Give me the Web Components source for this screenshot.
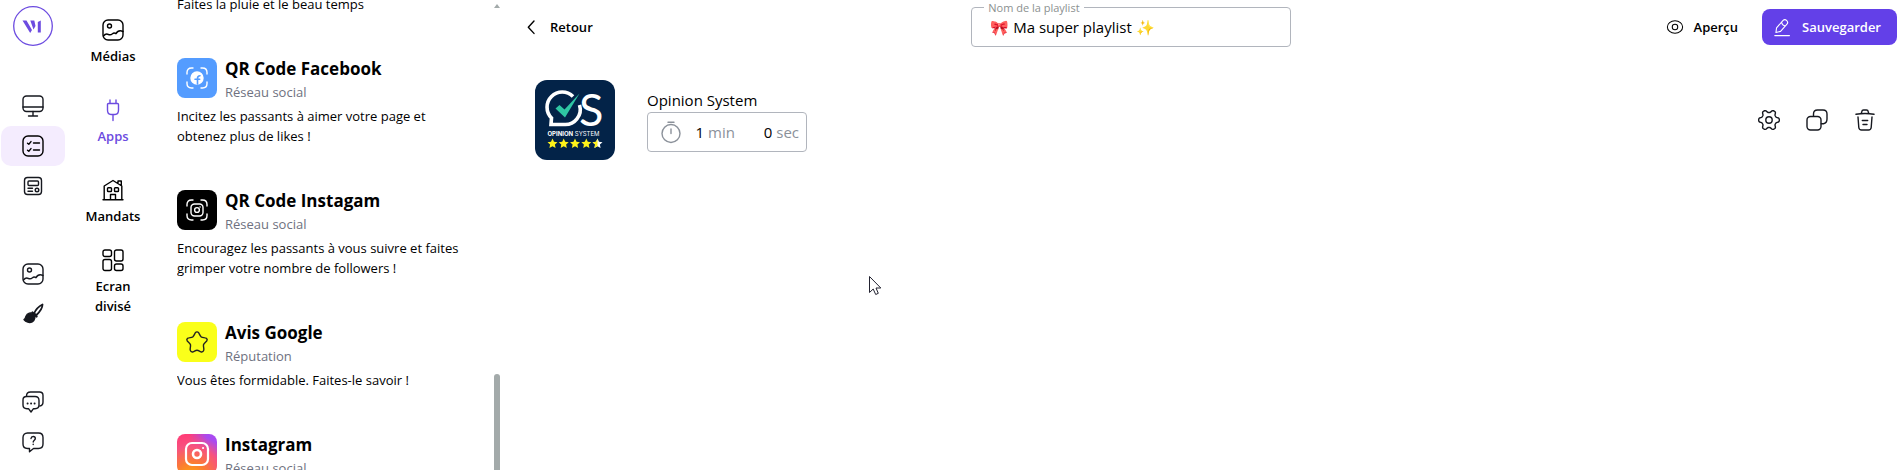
<!DOCTYPE html>
<html lang="fr">
<head>
<meta charset="utf-8">
<meta name="viewport" content="width=device-width, initial-scale=1">
<title>Ma super playlist</title>
<style>
  :root { --accent: #6340e8; --ink: #000; --muted: #6e7180; --line: #b1b5bd; }
  body { margin: 0; font: 13px/20px "Open Sans", "Noto Sans", sans-serif; color: var(--ink); background: #fff; }
</style>
</head>
<body>
<playlist-editor></playlist-editor>
<script>
const define = (name, html, setup) => {
  const template = document.createElement('template');
  template.innerHTML = html;
  customElements.define(name, class extends HTMLElement {
    constructor() {
      super();
      this.attachShadow({ mode: 'open' }).append(template.content.cloneNode(true));
    }
    connectedCallback() { if (setup) setup(this, this.shadowRoot); }
  });
};

// Outline of a six-toothed gear centred on (11, 11).
const gearOutline = () => {
  const points = [];
  for (let a = 0; a < 360; a += 4) {
    const t = a * Math.PI / 180;
    const r = 8.9 + 1.5 * Math.tanh(1.8 * Math.cos(6 * t));
    points.push((11 + r * Math.cos(t)).toFixed(2) + ' ' + (11 + r * Math.sin(t)).toFixed(2));
  }
  return 'M' + points.join('L') + 'z';
};

const ICONS = {
  image: '<rect x="1" y="1" width="20" height="20" rx="5"/><circle cx="7.5" cy="7" r="2"/><path d="M1.5 17c1.500-2 3-2.500 5-1.500 1.500.7 2.500.5 4-.8 1.200-1 2.300-.8 3.500 0 1.300-2.400 3.800-3.700 7-2.200"/>',
  monitor: '<rect x="1" y="1" width="20" height="15.500" rx="3.500"/><path d="M1 12h20M11 16.500v4M6.500 21h9"/>',
  list: '<rect x="1" y="1" width="20" height="20" rx="5"/><path d="M5.500 8.200l1.300 1 2.200-2.600M11.500 8h6M5.500 15.200l1.300 1 2.200-2.600M11.500 15h6"/>',
  news: '<rect x="2.500" y="2.500" width="17" height="17" rx="3"/><rect x="6" y="6" width="10.500" height="4.500" rx="1"/><path d="M6 13.200h4.500M6 16.300h4.500"/><circle cx="15" cy="15" r="1.800"/>',
  brush: '<path d="M12 10.500C14 6 17.500 3 20.500 1.500c0 3.500-2.500 7-6 10.500z" stroke-width="1.800"/><path d="M10.500 9.500l4 4" stroke-width="2.400"/><path d="M2 16.500c1.500-.3 1.300-1.500 2-3.300C5.200 10 9 8.800 11.500 11c2.300 2.300 1.500 6.300-1.300 7.800-2.600 1.400-6.400.4-8.200-2.300z" fill="currentColor"/>',
  chats: '<path d="M4.500 5.200C4.500 2 6 1 8.500 1h9C20 1 21 2.500 21 4.500V11c0 2.500-1 3.800-3.200 4"/><path d="M4.500 5.500H13c2.500 0 4 1.500 4 4v4.500c0 2.300-1.500 3.700-4 3.700h-1.500L9 21l-2.500-3.300H5c-2.500 0-4-1.400-4-3.700V9c0-2.200 1.300-3.500 3.500-3.500z"/><path d="M5.500 12.500h.2M9 12.500h.2M12.500 12.500h.2" stroke-width="1.800"/>',
  help: '<path d="M5.500 2h11C19.500 2 21 4 21 6.500V13c0 3-1.700 4.500-4.500 4.500h-5L7.500 20.800V17.500h-2C2.700 17.500 1 16 1 13V6.500C1 4 2.700 2 5.500 2z"/><path d="M9 7.500c.2-1.300 1-2 2.200-2 1.300 0 2.100.9 2.100 2 0 1.700-2.100 1.700-2.100 3.600M11.200 13.300v.2"/>',
  plug: '<path d="M8 1v3.500M14 1v3.500M6.500 4.500h9q1 0 1 1V11c0 3-1.500 4.500-3.500 4.500H9C7 15.500 5.500 14 5.500 11V5.500q0-1 1-1zM11 15.500V21.500"/>',
  house: '<path d="M1 20.800h20M2.200 20.500V7L11 1.500 19.800 7v13.500M16 4V2h3.300v4.500M8.500 20.500V15.500h5v5"/><rect x="5.500" y="8.800" width="4" height="3.700" rx=".8"/><rect x="12.500" y="8.800" width="4" height="3.700" rx=".8"/>',
  tiles: '<rect x="1" y="1" width="8.500" height="6.500" rx="2"/><rect x="1" y="10.500" width="8.500" height="11" rx="2"/><rect x="12.500" y="1" width="8.500" height="11" rx="2"/><rect x="12.500" y="15" width="8.500" height="6.500" rx="2"/>',
  back: '<path d="M14 5L8.300 11.200 14 17.400"/>',
  eye: '<ellipse cx="11" cy="11" rx="10.500" ry="8.500"/><circle cx="11" cy="11" r="3.800"/>',
  pen: '<path d="M1 21.500h19M2.500 17.500l.8-6L11.500 2c1.500-1.500 3.500-1.500 5 0s1.500 3.500 0 5L8.500 16zM9.800 4q.8 4.500 5 5"/>',
  gear: `<path d="${gearOutline()}"/><circle cx="11" cy="11" r="3.200"/>`,
  copy: '<rect x="1" y="7.500" width="14" height="13.500" rx="3.500"/><path d="M7.500 7V5c0-2.500 1.500-4 4-4H17c2.500 0 4 1.500 4 4v5c0 2.500-1.300 4.300-3.500 4.800H15.300"/>',
  trash: '<path d="M2 5.300c6-1 12-1 18 0M7.300 4.500l.5-2C8 1.400 8.600 1 9.500 1h3c.9 0 1.500.4 1.700 1.500l.5 2M4 8l.8 10.500c.2 1.800 1 2.500 2.700 2.500h7c1.700 0 2.500-.7 2.700-2.500L18 8M8.300 11.500h5.400M9 15.500h4"/>',
  timer: '<circle cx="11" cy="12.500" r="9"/><path d="M11 8v4.500M8 1.300h6"/>',
  facebook: '<path d="M1 7V5.500C1 2.500 2.500 1 5.500 1H7M15 1h1.500C19.500 1 21 2.500 21 5.500V7M21 15v1.500c0 3-1.500 4.500-4.500 4.500H15M7 21H5.500C2.500 21 1 19.500 1 16.500V15"/><circle cx="11" cy="11" r="6" fill="#fff"/><path d="M11.500 17v-5.500c0-1.700.8-2.700 2.500-2.700M9 12.300h4.700" stroke="#549cff" stroke-width="1.600"/>',
  instaqr: '<path d="M1 7V5.500C1 2.500 2.500 1 5.500 1H7M15 1h1.500C19.500 1 21 2.500 21 5.500V7M21 15v1.500c0 3-1.500 4.500-4.500 4.500H15M7 21H5.500C2.500 21 1 19.500 1 16.500V15"/><rect x="5" y="5" width="12" height="12" rx="3.500"/><circle cx="11" cy="11" r="2.400"/><path d="M14 8h.1"/>',
  star: '<path d="M9.400 1.600c.8-1 2.400-1 3.200 0 .9 1.500 1.300 3.300 2.600 4.200 1.600.9 3.600.7 5.300 1.600.8.700.8 1.800.2 2.600-1.100 1.300-2.700 2.200-3.200 3.800-.3 1.700.6 3.500.3 5.300-.4 1.300-1.500 2.200-2.900 1.800-1.300-.4-2.300-1.600-3.900-1.600s-2.600 1.200-3.900 1.600c-1.400.4-2.500-.5-2.900-1.800-.3-1.800.6-3.600.3-5.300C4 12.200 2.400 11.300 1.300 10c-.6-.8-.6-1.900.2-2.600 1.700-.9 3.700-.7 5.300-1.600C8.100 4.900 8.500 3.100 9.400 1.600z"/>',
  instagram: '<rect x="0" y="0" width="22" height="22" rx="6" stroke-width="2.200"/><circle cx="11" cy="11" r="4" stroke-width="2.600"/><path d="M17 5h.1" stroke-width="2"/>'
};

define('ui-icon', `<style>
  :host { display: block; width: 22px; height: 22px; flex: none; }
  svg { display: block; width: 100%; height: 100%; overflow: visible; }
</style><svg viewBox="0 0 22 22" fill="none" stroke="currentColor" stroke-width="1.4" stroke-linecap="round" stroke-linejoin="round" aria-hidden="true"></svg>`,
(el, root) => { root.querySelector('svg').innerHTML = ICONS[el.getAttribute('name')]; });

define('rail-link', `<style>
  :host { display: block; }
  a { display: flex; align-items: center; justify-content: center; height: 40px; border-radius: 10px; color: #16181f; }
  :host([active]) a { background: #f4ecfe; color: #000; }
</style><a href="#"><ui-icon></ui-icon></a>`,
(el, root) => {
  root.querySelector('ui-icon').setAttribute('name', el.getAttribute('icon'));
  root.querySelector('ui-icon').connectedCallback();
  root.querySelector('a').setAttribute('aria-label', el.getAttribute('label'));
});

define('app-rail', `<style>
  :host { display: flex; flex-direction: column; width: 64px; padding: 6px 1px 8px; box-sizing: content-box; flex: none; }
  .brand { align-self: center; width: 40px; height: 40px; }
  .brand svg { display: block; }
  .group { margin-top: 40px; }
  .group + .group { margin-top: 48px; }
  .group:last-child { margin-top: auto; }
</style>
<a class="brand" href="#" aria-label="Accueil"><svg width="40" height="40" viewBox="0 0 40 40" fill="#6c4be0">
  <circle cx="20" cy="20" r="19.300" fill="none" stroke="#6c4be0" stroke-width="1.300"/>
  <path d="M9.500 14.500h4l5.500 9.500-1.800 3zM17.300 14.500h4l1.200 5.500-2 3.500zM24.800 16l3-1.500V26.500h-3z"/>
</svg></a>
<nav class="group"><rail-link icon="monitor" label="Écrans"></rail-link><rail-link icon="list" label="Playlists" active></rail-link><rail-link icon="news" label="Actualités"></rail-link></nav>
<nav class="group"><rail-link icon="image" label="Médiathèque"></rail-link><rail-link icon="brush" label="Thème"></rail-link></nav>
<nav class="group"><rail-link icon="chats" label="Messages"></rail-link><rail-link icon="help" label="Aide"></rail-link></nav>`);

define('category-tab', `<style>
  :host { display: block; }
  a { display: flex; flex-direction: column; align-items: center; justify-content: center; gap: 5px; min-height: 80px; color: inherit; text-decoration: none; text-align: center; font-weight: 600; }
  span { max-width: 64px; }
  :host([active]) a { color: #6c4be0; }
</style><a href="#"><ui-icon></ui-icon><span><slot></slot></span></a>`,
(el, root) => {
  root.querySelector('ui-icon').setAttribute('name', el.getAttribute('icon'));
  root.querySelector('ui-icon').connectedCallback();
});

define('category-tabs', `<style>
  :host { display: block; width: 80px; padding: 2px 24px 0 7px; flex: none; }
</style><nav>
<category-tab icon="image">Médias</category-tab>
<category-tab icon="plug" active>Apps</category-tab>
<category-tab icon="house">Mandats</category-tab>
<category-tab icon="tiles">Ecran divisé</category-tab></nav>`);

define('app-card', `<style>
  :host { display: block; margin-bottom: 44px; }
  header { display: flex; gap: 8px; height: 40px; margin-bottom: 8px; }
  .tile { display: flex; align-items: center; justify-content: center; width: 40px; height: 40px; border-radius: 8px; flex: none; background: var(--tile); color: var(--glyph, #fff); }
  h2 { margin: 0 0 2px; font-size: 17px; line-height: 22px; font-weight: 700; white-space: nowrap; }
  small { display: block; font-size: 13px; line-height: 20px; color: var(--muted); }
  p { margin: 0; }
</style><article><header><div class="tile"><ui-icon></ui-icon></div><div><h2><slot name="title"></slot></h2><small><slot name="kind"></slot></small></div></header><p><slot></slot></p></article>`,
(el, root) => {
  root.querySelector('ui-icon').setAttribute('name', el.getAttribute('icon'));
  root.querySelector('ui-icon').connectedCallback();
});

define('app-list', `<style>
  :host { display: flex; width: 323px; height: 100%; overflow: hidden; flex: none; }
  .items { flex: 1; margin-top: -6px; padding-right: 32px; }
  .intro { margin: 0 0 44px; }
  .bar { display: flex; flex-direction: column; align-items: center; width: 6px; padding-top: 4px; }
  .up { border: 3px solid transparent; border-top: 0; border-bottom: 4px solid #a3aaaa; }
  .thumb { width: 6px; flex: 1; margin-top: 366px; border-radius: 3px 3px 0 0; background: #a3aaaa; }
  .facebook { --tile: #549cff; }
  .instaqr { --tile: #000; }
  .star { --tile: #faff1a; --glyph: #222; }
  .instagram { --tile: radial-gradient(circle at 35% 110%, #ffb000 0, #fb7a35 32%, #f7527f 62%, transparent 85%), linear-gradient(90deg, #ff3d77 30%, #a94af0 75%); }
</style>
<div class="items">
<p class="intro">Faites la pluie et le beau temps</p>
<app-card class="facebook" icon="facebook"><span slot="title">QR Code Facebook</span><span slot="kind">Réseau social</span>Incitez les passants à aimer votre page et obtenez plus de likes !</app-card>
<app-card class="instaqr" icon="instaqr"><span slot="title">QR Code Instagam</span><span slot="kind">Réseau social</span>Encouragez les passants à vous suivre et faites grimper votre nombre de followers !</app-card>
<app-card class="star" icon="star"><span slot="title">Avis Google</span><span slot="kind">Réputation</span>Vous êtes formidable. Faites-le savoir !</app-card>
<app-card class="instagram" icon="instagram"><span slot="title">Instagram</span><span slot="kind">Réseau social</span></app-card>
</div>
<div class="bar"><i class="up"></i><i class="thumb"></i></div>`);

define('playlist-header', `<style>
  :host { display: flex; align-items: center; justify-content: space-between; padding: 7px 7px 0 10px; }
  button { display: flex; align-items: center; height: 36px; border: 0; border-radius: 8px; background: none; font-family: inherit; font-size: 13px; line-height: 20px; font-weight: 600; color: inherit; }
  .back { gap: 8px; width: 88px; padding: 0; }
  .actions { display: flex; gap: 12px; }
  .preview { gap: 11px; padding: 0 12px; }
  .preview ui-icon { width: 16px; height: 16px; }
  .save { gap: 11px; padding: 0 16px 0 12px; background: var(--accent); color: #fff; }
  .save ui-icon { width: 17px; height: 17px; }
  fieldset { width: 320px; height: 40px; box-sizing: border-box; margin: 0; padding: 0; position: relative; border: 1px solid var(--line); border-radius: 4px; }
  label { position: absolute; left: 12px; top: -10px; padding: 0 4px; background: #fff; font-size: 11px; color: #8b9090; }
  input { display: block; width: 100%; height: 38px; box-sizing: border-box; padding: 0 18px; border: 0; background: none; font-family: inherit; font-size: 15px; color: #000; outline: 0; }
</style>
<button class="back" type="button"><ui-icon name="back"></ui-icon>Retour</button>
<fieldset><label for="name">Nom de la playlist</label><input id="name" type="text" value="🎀 Ma super playlist ✨"></fieldset>
<div class="actions"><button class="preview" type="button"><ui-icon name="eye"></ui-icon>Aperçu</button><button class="save" type="button"><ui-icon name="pen"></ui-icon>Sauvegarder</button></div>`);

define('opinion-logo', `<style>
  :host { display: block; width: 80px; height: 80px; flex: none; }
  svg { display: block; }
</style><svg width="80" height="80" viewBox="0 0 80 80" role="img" aria-label="Opinion System">
  <rect width="80" height="80" rx="12" fill="#032348"/>
  <path d="M38 16.500A15 15 0 0 0 16.500 38L16 44.500h13A15 15 0 0 0 44.500 25" fill="none" stroke="#fff" stroke-width="3.600"/>
  <text x="44" y="46" font-family="Lato, sans-serif" font-size="45" fill="#fff">S</text>
  <path d="M20.500 28.500l4-3.500 5 4.500L44.500 13.500 30 37.500z" fill="#2fc6a3" stroke="#032348" stroke-width="1" paint-order="stroke"/>
  <text x="12.500" y="56" font-family="Inter, sans-serif" font-size="6" fill="#fff"><tspan font-weight="700">OPINION</tspan> SYSTEM</text>
  <defs><path id="s" d="M0-5L1.500-1.700 5-1.300 2.400 1.100 3.100 4.600 0 2.800-3.100 4.600-2.400 1.100-5-1.300-1.500-1.700z"/></defs>
  <g fill="#fff31a"><use href="#s" x="17.500" y="63.500"/><use href="#s" x="28.700" y="63.500"/><use href="#s" x="40" y="63.500"/><use href="#s" x="51.300" y="63.500"/><use href="#s" x="62.500" y="63.500" fill="#fff"/></g>
  <path d="M62.500 58.500L61 61.800l-3.500.4 2.600 2.400-.7 3.500 3.100-1.800z" fill="#fff31a"/>
</svg>`);

define('playlist-item', `<style>
  :host { display: flex; align-items: center; padding: 33px 28px 0 25px; }
  .info { margin-left: 32px; }
  h3 { margin: 0; font-size: 15px; line-height: 24px; font-weight: 400; }
  .duration { display: flex; align-items: center; box-sizing: border-box; width: 160px; height: 40px; padding: 0 7px 0 12px; border: 1px solid var(--line); border-radius: 4px; color: #8b919a; font-size: 15px; }
  .duration ui-icon { margin-right: 4px; }
  input { width: 18px; padding: 0; margin: 0 4px 0 0; border: 0; background: none; font-family: inherit; font-size: 15px; text-align: right; color: #000; appearance: textfield; -moz-appearance: textfield; outline: 0; }
  input::-webkit-inner-spin-button { display: none; }
  #sec { margin-left: auto; }
  .tools { display: flex; gap: 26px; margin-left: auto; }
  .tools button { padding: 0; border: 0; background: none; color: #16181f; }
</style>
<opinion-logo></opinion-logo>
<div class="info"><h3>Opinion System</h3>
<div class="duration"><ui-icon name="timer"></ui-icon><input id="min" type="number" value="1"><label for="min">min</label><input id="sec" type="number" value="0"><label for="sec">sec</label></div></div>
<div class="tools"><button type="button" aria-label="Paramètres"><ui-icon name="gear"></ui-icon></button><button type="button" aria-label="Dupliquer"><ui-icon name="copy"></ui-icon></button><button type="button" aria-label="Supprimer"><ui-icon name="trash"></ui-icon></button></div>`);

define('mouse-pointer', `<style>
  :host { display: block; position: absolute; left: 869px; top: 276px; width: 13px; height: 20px; pointer-events: none; }
  svg { display: block; }
</style><svg width="13" height="20" viewBox="0 0 13 20" aria-hidden="true"><path d="M.5.500v16l3.700-3.500 2.500 5.500 2.600-1.200L7 12h4.800z" fill="#fff" stroke="#222230"/></svg>`);

define('playlist-editor', `<style>
  :host { display: flex; height: 100vh; overflow: hidden; position: relative; }
  main { flex: 1; min-width: 0; margin-left: 10px; }
</style>
<app-rail></app-rail><category-tabs></category-tabs><app-list></app-list>
<main><playlist-header></playlist-header><playlist-item></playlist-item></main>
<mouse-pointer></mouse-pointer>`);
</script>
</body>
</html>
